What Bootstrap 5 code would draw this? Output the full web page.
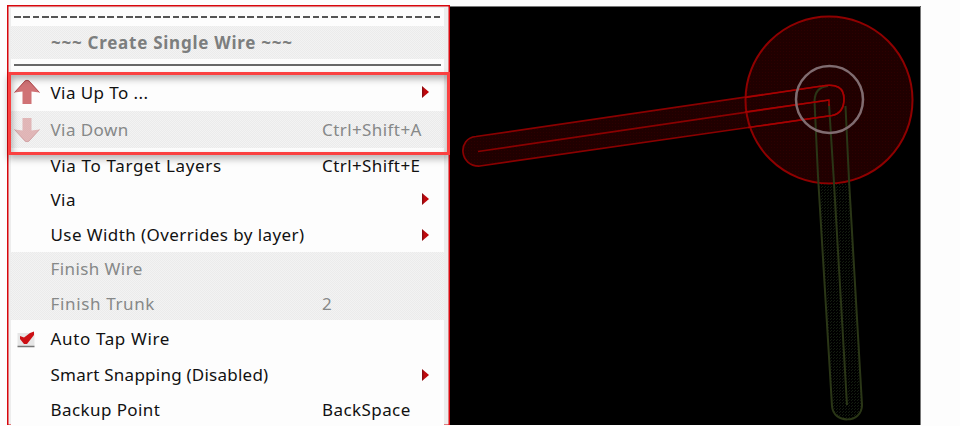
<!DOCTYPE html>
<html lang="en">
<head>
<meta charset="utf-8">
<meta name="viewport" content="width=device-width, initial-scale=1">
<title>Create Single Wire</title>
<link href="https://cdn.jsdelivr.net/npm/bootstrap@5.3.0/dist/css/bootstrap.min.css" rel="stylesheet">
<style>
body{background:#fdfdfd;font-family:"Noto Sans","Open Sans",sans-serif;height:426px}
.stage{height:425px;padding:5px 39px 0 7px}
.wire-menu{width:443px;height:420px;box-shadow:inset 1px 1px 0 .5px #d8060c,inset -1px 0 0 .5px #d8060c;background:#ededed;padding:3px 6px 0 4px;color:#111;font-size:17px;line-height:1;letter-spacing:.42px}
.tear{height:18px;background:#fdfdfd;padding:8px 3px 0}
.tear i{display:block;height:1.5px;background:repeating-linear-gradient(90deg,#555 0 6.6px,transparent 6.6px 9.33px)}
.head{height:33px;padding-left:40px;font-weight:700;color:#7c7e7e;letter-spacing:.74px}
.rule{height:16px;background:#fdfdfd;padding:5px 3px 0}
.rule i{display:block;height:2px;background:#686868}
.entry{background:#fdfdfd;padding-left:3px}
.entry.off,.head{background:conic-gradient(#ebebeb 25%,#f3f3f3 0 50%,#ebebeb 0 75%,#f3f3f3 0) 0 0/2px 2px}
.entry.off{color:#868888}
.ls-wide{letter-spacing:.64px}
.ls-snug{letter-spacing:.24px}
.ico{width:36.5px}
.ico svg,.arr svg{display:block}
.key{width:106px}
.arr{width:22px}
.endgap{width:16px}
.frame{left:8px;top:72px;width:442px;height:83px;border:3px solid #fa4141;box-shadow:0 4px 7px rgba(0,0,0,.28),inset 1px 4px 7px rgba(0,0,0,.3)}
.mh1{height:36px}.mh2{height:37px}.mh3{height:35px}.mh4{height:34px}
.lift{padding-bottom:2px}
.canvas-pane{height:420px;padding-top:1px}
</style>
<script src="https://cdn.jsdelivr.net/npm/bootstrap@5.3.0/dist/js/bootstrap.bundle.min.js"></script>
</head>
<body class="overflow-hidden">
<svg width="0" height="0" class="position-absolute"><defs>
<linearGradient id="ag" x2="1"><stop offset="0" stop-color="#800c10"/><stop offset=".4" stop-color="#c30a10"/><stop offset="1" stop-color="#b00"/></linearGradient>
<symbol id="sub" viewBox="0 0 8 12"><path d="M0 0L7 6L0 12Z" fill="url(#ag)"/></symbol>
<symbol id="up" viewBox="0 0 26 26"><path d="M11 1.500Q13 .3 15 1.500L25.500 13.500L17.500 12.500V25H8.500V12.500L.5 13.500Z" fill="#d07275"/><path d="M.5 13.500L11 2Q13 .5 15 2L25.500 13.500" fill="none" stroke="#b04c50" stroke-width="1"/></symbol>
</defs></svg>
<main class="stage d-flex position-relative">
<nav class="wire-menu flex-shrink-0 text-nowrap" aria-label="Create Single Wire">
<div class="tear"><i></i></div>
<div class="head d-flex align-items-center"><span>~~~ Create Single Wire ~~~</span></div>
<div class="rule"><i></i></div>
<div class="entry mh1 lift d-flex align-items-center"><span class="ico"><svg width="26" height="26"><use href="#up"/></svg></span><span class="flex-fill">Via Up To ...</span><span class="arr"><svg width="8" height="12"><use href="#sub"/></svg></span></div>
<div class="entry off mh2 d-flex align-items-center"><span class="ico"><svg width="26" height="26" opacity=".45"><use href="#up" width="26" height="26" transform="matrix(1 0 0 -1 0 26)"/></svg></span><span class="flex-fill">Via Down</span><span class="key">Ctrl+Shift+A</span><span class="endgap"></span></div>
<div class="entry mh3 d-flex align-items-center"><span class="ico"></span><span class="flex-fill ls-wide">Via To Target Layers</span><span class="key">Ctrl+Shift+E</span><span class="endgap"></span></div>
<div class="entry mh4 lift d-flex align-items-center"><span class="ico"></span><span class="flex-fill">Via</span><span class="arr"><svg width="8" height="12"><use href="#sub"/></svg></span></div>
<div class="entry mh3 d-flex align-items-center"><span class="ico"></span><span class="flex-fill">Use Width (Overrides by layer)</span><span class="arr"><svg width="8" height="12"><use href="#sub"/></svg></span></div>
<div class="entry off mh4 lift d-flex align-items-center"><span class="ico"></span><span class="flex-fill">Finish Wire</span></div>
<div class="entry off mh4 d-flex align-items-center"><span class="ico"></span><span class="flex-fill ls-wide">Finish Trunk</span><span class="key">2</span><span class="endgap"></span></div>
<div class="entry mh2 d-flex align-items-center"><span class="ico"><svg width="24" height="18" viewBox="0 0 24 18"><path d="M3.500 3H20.500V16H3.500Z" fill="#e6e6e6"/><path d="M3.500 16.500H20.500" stroke="#777" stroke-width="1.500"/><path d="M6 6L10 7.500L16 3L20 1.500V5L13 14H10L6 9Z" fill="#cc1015"/></svg></span><span class="flex-fill ls-wide">Auto Tap Wire</span></div>
<div class="entry mh3 d-flex align-items-center"><span class="ico"></span><span class="flex-fill ls-snug">Smart Snapping (Disabled)</span><span class="arr"><svg width="8" height="12"><use href="#sub"/></svg></span></div>
<div class="entry mh4 d-flex align-items-center"><span class="ico"></span><span class="flex-fill">Backup Point</span><span class="key">BackSpace</span><span class="endgap"></span></div>
</nav>
<section class="canvas-pane flex-shrink-0"><svg class="d-block" width="471" height="419" viewBox="450 6 471 419" fill="none">
<defs><pattern id="dots" width="3" height="3" patternUnits="userSpaceOnUse"><path d="M0 0H3V3H0Z" fill="#200000"/><path d="M0 0H1V1H0Z" fill="#2c0000"/></pattern>
<pattern id="gd" width="3" height="3" patternUnits="userSpaceOnUse"><path d="M0 0H1V1H0ZM2 1H3V2H2Z" fill="#141c10"/></pattern></defs>
<path d="M450 6H921V425H450Z" fill="#000"/><path d="M450 6.500H920.500V425" stroke="#777"/>
<path d="M476 136.500L822 86Q844 82 844 99Q844 113 832 115.500L480 166C459 167 457 138 476 136.500Z" fill="url(#dots)"/>
<circle cx="829" cy="100" r="83.500" fill="url(#dots)" stroke="#8f0000" stroke-width="2"/>
<path d="M819 184L832 408C834 424 861 424 862 407L850 184Z" fill="url(#gd)"/>
<path d="M828 86Q815 87 814.500 101L818 176L832 406C833 424 862 424 862 405L849 180L845.500 106M829 104L834 183L847 405" stroke="#2a3616" stroke-width="2"/>
<path d="M476 136.500L822 86Q844 82 844 99Q844 113 832 115.500L480 166C459 167 457 138 476 136.500ZM478 151.500L829 100" stroke="#8a0000" stroke-width="1.700"/>
<path d="M745 97.500L822 86Q844 82 844 99Q844 113 832 115.500L748 127.500M745 112L829 100V106" stroke="#a80000" stroke-width="1.500"/>
<circle cx="829.500" cy="99.500" r="33.500" stroke="#806c70" stroke-width="2.500"/>
</svg></section>
<div class="frame position-absolute"></div>
</main>
</body>
</html>
